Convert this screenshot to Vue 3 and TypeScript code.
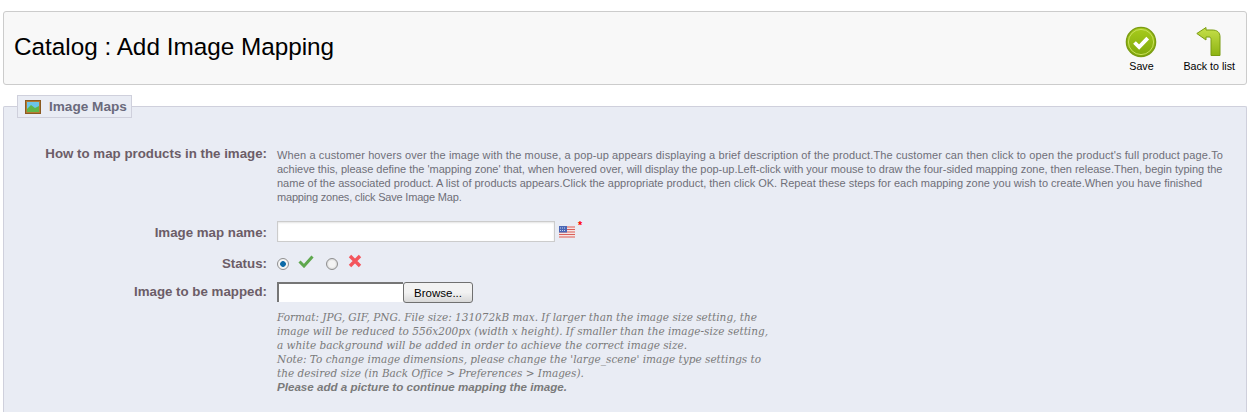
<template>
  <div class="page">
    <div class="toolbar">
      <h2 class="page-title">Catalog : Add Image Mapping</h2>
      <ul class="actions">
        <li class="action action-save">
          <svg width="32" height="32" viewBox="0 0 32 32">
            <defs>
              <linearGradient id="saveFill" x1="0" y1="0" x2="0" y2="1">
                <stop offset="0" stop-color="#a8cc1c" />
                <stop offset="1" stop-color="#7fa80b" />
              </linearGradient>
            </defs>
            <circle cx="16" cy="16" r="14.6" fill="url(#saveFill)" stroke="#7b9c12" stroke-width="1.4" />
            <circle cx="16" cy="16" r="12.6" fill="none" stroke="#c9e05c" stroke-width="1" />
            <path d="M9.500 16.500l4.600 4.600 8.600-9" fill="none" stroke="#fff" stroke-width="3.800" />
          </svg>
          <span>Save</span>
        </li>
        <li class="action action-back">
          <svg width="26" height="32" viewBox="0 0 26 32">
            <defs>
              <linearGradient id="backFill" x1="0" y1="0" x2="0" y2="1">
                <stop offset="0" stop-color="#c6e04a" />
                <stop offset="1" stop-color="#8db312" />
              </linearGradient>
            </defs>
            <path d="M10 1.500L.8 7.500 10 14v-3h3c1.500 0 2 1 2 2.500V29.500h9V11c0-5-3-7-8-7h-6z" fill="url(#backFill)" stroke="#7a9c12" stroke-width="1" stroke-linejoin="round" />
          </svg>
          <span>Back to list</span>
        </li>
      </ul>
    </div>

    <fieldset class="panel">
      <legend class="panel-legend">
        <svg width="16" height="14" viewBox="0 0 16 14">
          <rect x=".5" y=".5" width="15" height="13" fill="#b57b33" stroke="#8a5a20" />
          <rect x="2" y="2" width="12" height="10" fill="#6cc5e8" />
          <path d="M2 9l4-4 4 3 4-2v6H2z" fill="#5fb64a" />
        </svg>
        Image Maps
      </legend>

      <div class="row row-help">
        <label class="row-label">How to map products in the image:</label>
        <p class="row-text">
          <span
            v-for="line in helpLines"
            :key="line.text"
            class="help-line"
            :style="{ letterSpacing: line.spacing + 'px' }"
          >{{ line.text }}</span>
        </p>
      </div>

      <div class="row row-name">
        <label class="row-label">Image map name:</label>
        <div class="row-field">
          <input class="text-input" type="text" />
          <svg class="flag" width="16" height="12" viewBox="0 0 16 12">
            <rect width="16" height="12" fill="#f4e4e4" />
            <path d="M0 1h16M0 3.500h16M0 6h16M0 8.500h16M0 11h16" stroke="#d9605a" stroke-width="1.200" />
            <rect width="8" height="6.500" fill="#4a66b5" />
            <path d="M1 2h6M1 4.500h6" stroke="#c8d4f0" stroke-width="1" stroke-dasharray="1 1" />
          </svg>
          <sup class="required">*</sup>
        </div>
      </div>

      <div class="row row-status">
        <label class="row-label">Status:</label>
        <div class="row-field status-field">
          <input class="radio" type="radio" name="status" checked />
          <svg class="status-icon" width="16" height="14" viewBox="0 0 16 14">
            <path d="M1.500 7.500l4.500 4.500L14.500 2.500" fill="none" stroke="#5fa84e" stroke-width="3" />
          </svg>
          <input class="radio radio-second" type="radio" name="status" />
          <svg class="status-icon" width="16" height="16" viewBox="0 0 16 16">
            <path d="M3 3l10 10M13 3L3 13" fill="none" stroke="#f4555c" stroke-width="3.400" />
          </svg>
        </div>
      </div>

      <div class="row row-file">
        <label class="row-label">Image to be mapped:</label>
        <div class="row-field">
          <div class="file-name"></div>
          <button class="browse" type="button">Browse...</button>
        </div>
      </div>

      <div class="row">
        <span class="row-label"></span>
        <p class="file-help">
          Format: JPG, GIF, PNG. File size: 131072kB max. If larger than the image size setting, the image will be reduced to 556x200px (width x height). If smaller than the image-size setting, a white background will be added in order to achieve the correct image size.<br />
          Note: To change image dimensions, please change the 'large_scene' image type settings to the desired size (in Back Office &gt; Preferences &gt; Images).<br />
          <b>Please add a picture to continue mapping the image.</b>
        </p>
      </div>
    </fieldset>
  </div>
</template>

<script setup lang="ts">
// line breaks and tracking follow the reference, its font hints differently per line
const helpLines = [
  { text: "When a customer hovers over the image with the mouse, a pop-up appears displaying a brief description of the product.The customer can then click to open the product's full product page.To", spacing: 0.117 },
  { text: "achieve this, please define the 'mapping zone' that, when hovered over, will display the pop-up.Left-click with your mouse to draw the four-sided mapping zone, then release.Then, begin typing the", spacing: -0.018 },
  { text: "name of the associated product. A list of products appears.Click the appropriate product, then click OK. Repeat these steps for each mapping zone you wish to create.When you have finished", spacing: 0 },
  { text: "mapping zones, click Save Image Map.", spacing: -0.19 }
]
</script>

<style>
html, body {
  margin: 0;
  background: #fff;
  overflow: hidden;
}
</style>

<style scoped>
.page {
  height: 412px;
  padding: 11px 10px 0 3px;
  box-sizing: border-box;
  font-family: "Liberation Sans", Arial, sans-serif;
  overflow: hidden;
}

.toolbar {
  display: flex;
  align-items: center;
  justify-content: space-between;
  height: 74px;
  box-sizing: border-box;
  border: 1px solid #cccccc;
  border-radius: 3px;
  background: #f8f8f8;
  padding: 0 11px 0 10px;
}

.page-title {
  margin: 0 0 2px;
  font-size: 24.3px;
  font-weight: normal;
  color: #000;
}

.actions {
  display: flex;
  margin: 2px 0 0;
  padding: 0;
  list-style: none;
}

.action {
  display: flex;
  flex-direction: column;
  align-items: center;
  font-size: 10.67px;
  color: #000;
}

.action svg {
  display: block;
  margin-bottom: 2px;
}

.action-back {
  margin-left: 26px;
}

.panel {
  margin: 10px 0 0;
  padding: 0;
  height: 320px;
  box-sizing: border-box;
  border: 1px solid #cfd0dc;
  border-bottom: 0;
  border-radius: 2px 2px 0 0;
  background: #e9ecf4;
}

.panel-legend {
  display: flex;
  align-items: center;
  gap: 8px;
  margin-left: 13px;
  padding: 0 4px 0 7px;
  height: 23px;
  box-sizing: border-box;
  border: 1px solid #cfd0dc;
  background: #e9ecf4;
  font-size: 13.6px;
  font-weight: bold;
  color: #6a6a7c;
}

.row {
  display: flex;
  align-items: flex-start;
}

.row-label {
  flex: 0 0 263px;
  text-align: right;
  font-size: 13.3px;
  font-weight: bold;
  line-height: 16px;
  color: #6c5d67;
}

.row-text {
  margin: 2px 0 0 10px;
  font-size: 11px;
  line-height: 14px;
  color: #6f6f78;
}

.help-line {
  display: block;
  white-space: nowrap;
}

.row-help {
  margin-top: 28px;
}

.row-name {
  margin-top: 17px;
}

.row-name .row-label {
  margin-top: 4px;
}

.row-field {
  display: flex;
  align-items: flex-start;
  margin-left: 10px;
}

.text-input {
  width: 278px;
  height: 21px;
  box-sizing: border-box;
  margin: 0;
  padding: 0;
  border: 1px solid #cccccc;
  background: #fff;
  box-shadow: inset 0 1px 2px #e4e4e4;
}

.flag {
  margin: 5px 0 0 4px;
}

.required {
  margin-left: 3px;
  color: #f00;
  font-size: 10.67px;
  line-height: 8px;
  vertical-align: baseline;
  font-weight: bold;
}

.row-status {
  margin-top: 14px;
}

.status-field {
  align-items: center;
  height: 16px;
}

.radio {
  appearance: none;
  width: 12px;
  height: 12px;
  margin: 0;
  box-sizing: border-box;
  border: 1px solid #8f8f8f;
  border-radius: 50%;
  background: radial-gradient(circle, #f4f4f4 0 3px, #dcdcdc 5px);
}

.radio:checked {
  background: radial-gradient(circle, #0b6aa8 0 2.500px, #f4f4f4 3.200px);
}

.status-icon {
  margin-left: 9px;
  margin-top: -7px;
}

.status-icon + .radio-second {
  margin-left: 12px;
}

.row-file {
  margin-top: 10px;
}

.row-file .row-label {
  margin-top: 2px;
}

.file-name {
  width: 126px;
  height: 20px;
  background: #fff;
  border-left: 2px solid #767676;
  border-top: 2px solid #767676;
  box-sizing: border-box;
}

.browse {
  width: 70px;
  height: 21px;
  padding: 0;
  border: 1px solid #707070;
  border-radius: 3px;
  background: linear-gradient(#f2f2f2 0 50%, #d8d8d8);
  font-family: "Liberation Sans", Arial, sans-serif;
  font-size: 11.5px;
  color: #000;
}

.file-help {
  margin: 7px 0 0 10px;
  width: 499px;
  font-family: "DejaVu Serif", Georgia, serif;
  font-style: italic;
  font-size: 10.5px;
  line-height: 14px;
  color: #7a7a7a;
}

.file-help b {
  font-family: "Liberation Sans", Arial, sans-serif;
  font-size: 11.6px;
}
</style>
